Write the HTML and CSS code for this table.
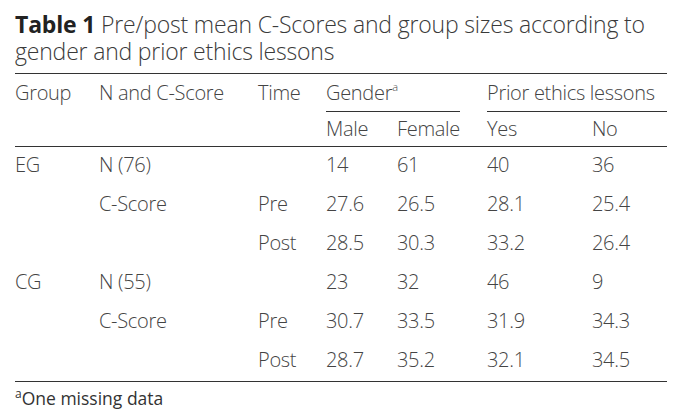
FILE: index.html
```html
<!DOCTYPE html>
<html>
<head>
<meta charset="utf-8">
<link rel="stylesheet" href="styles.css">
</head>
<body>
<div class="page">
  <div class="caption"><b>Table 1</b> Pre/post mean C-Scores and group sizes according to gender and prior ethics lessons</div>
  <table class="data">
    <colgroup>
      <col class="c-group"><col class="c-n"><col class="c-time"><col class="c-male"><col class="c-female"><col class="c-gap"><col class="c-yes"><col class="c-no">
    </colgroup>
    <thead>
      <tr class="h1">
        <th>Group</th><th>N and C-Score</th><th>Time</th>
        <th colspan="2" class="span-head">Gender<sup>a</sup></th>
        <th></th>
        <th colspan="2" class="span-head">Prior ethics lessons</th>
      </tr>
      <tr class="h2">
        <th></th><th></th><th></th><th>Male</th><th>Female</th><th></th><th>Yes</th><th>No</th>
      </tr>
    </thead>
    <tbody>
      <tr><td>EG</td><td>N (76)</td><td></td><td>14</td><td>61</td><td></td><td>40</td><td>36</td></tr>
      <tr><td></td><td>C-Score</td><td>Pre</td><td>27.6</td><td>26.5</td><td></td><td>28.1</td><td>25.4</td></tr>
      <tr><td></td><td></td><td>Post</td><td>28.5</td><td>30.3</td><td></td><td>33.2</td><td>26.4</td></tr>
      <tr><td>CG</td><td>N (55)</td><td></td><td>23</td><td>32</td><td></td><td>46</td><td>9</td></tr>
      <tr><td></td><td>C-Score</td><td>Pre</td><td>30.7</td><td>33.5</td><td></td><td>31.9</td><td>34.3</td></tr>
      <tr><td></td><td></td><td>Post</td><td>28.7</td><td>35.2</td><td></td><td>32.1</td><td>34.5</td></tr>
    </tbody>
  </table>
  <div class="footnote"><sup>a</sup>One missing data</div>
</div>
</body>
</html>
```
FILE: styles.css
```css
html, body {
  margin: 0;
  padding: 0;
  background: #ffffff;
}
.page {
  padding: 11px 0 0 15px;
  width: 652px;
  font-family: "Open Sans", "Liberation Sans", sans-serif;
  color: #444444;
}
.caption {
  font-size: 23px;
  line-height: 27px;
  font-weight: 300;
  letter-spacing: -0.18px;
  color: #3a3a3a;
  margin-bottom: 8px;
}
.caption b {
  font-weight: 700;
  color: #222222;
}
.data {
  width: 652px;
  table-layout: fixed;
  border-collapse: collapse;
  font-size: 20px;
  font-weight: 300;
  letter-spacing: -0.3px;
  border-top: 1.5px solid #333333;
  border-bottom: 1.5px solid #333333;
}
.c-group { width: 84px; }
.c-n { width: 159px; }
.c-time { width: 68px; }
.c-male { width: 71px; }
.c-female { width: 63px; }
.c-gap { width: 27px; }
.c-yes { width: 105px; }
.c-no { width: 75px; }
.data th, .data td {
  padding: 0;
  text-align: left;
  font-weight: 300;
  white-space: nowrap;
  vertical-align: top;
}
.h1 th {
  line-height: 37px;
}
.span-head {
  border-bottom: 1.5px solid #333333;
}
.h2 th {
  line-height: 34px;
}
thead {
  border-bottom: 1.5px solid #333333;
}
.data td {
  line-height: 35px;
  padding-bottom: 4px;
}
sup {
  font-size: 11px;
  line-height: 0;
  vertical-align: 9px;
  letter-spacing: 0;
}
.footnote {
  font-size: 17.5px;
  line-height: 24px;
  padding-top: 4px;
  color: #333333;
}
.footnote sup {
  font-size: 12px;
  vertical-align: 7px;
}
```
